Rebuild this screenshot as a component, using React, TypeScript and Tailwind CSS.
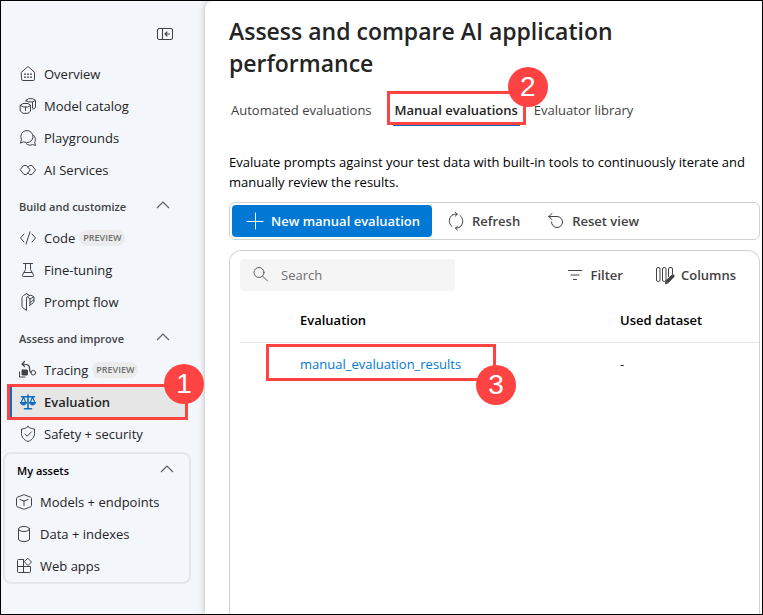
import type { ReactNode } from "react";

function Icon({ children, className = "size-4" }: { children: ReactNode; className?: string }) {
  return (
    <svg
      viewBox="0 0 16 16"
      className={`shrink-0 overflow-visible ${className}`}
      fill="none"
      stroke="currentColor"
      strokeWidth="1"
      strokeLinecap="round"
      strokeLinejoin="round"
      aria-hidden="true"
    >
      {children}
    </svg>
  );
}

const icons = {
  collapse: (
    <Icon>
      <rect x="0.5" y="2.5" width="15" height="11" rx="1.5" />
      <path d="M5.5 2.5v11M12.500 8H8M10 6 8 8l2 2" strokeWidth="1.100" />
    </Icon>
  ),
  overview: (
    <Icon>
      <path d="M1.5 6.2 7.2 1.1a1.2 1.2 0 0 1 1.6 0l5.7 5.1v7a1.3 1.3 0 0 1-1.3 1.3H2.8a1.3 1.3 0 0 1-1.3-1.3z" />
      <path strokeWidth="1.7" d="M5 8.2h.01M8 8.2h.01M11 8.2h.01M5 11.2h.01M8 11.2h.01M11 11.2h.01" />
    </Icon>
  ),
  catalog: (
    <Icon>
      <path d="M6 3.500V2.300L8.500.7h4l3 1.600v7.200l-2.500 1.700M6 2.400l2.800 1.500h3.700l3-1.500M12.500 4v6" />
      <path d="M.5 7.200 3 5.500h5l2.500 1.700v6L8 15.300H3L.5 13.200zM.5 7.400 3.200 9h4.600l2.700-1.600M5.500 9v3.500" />
    </Icon>
  ),
  playground: (
    <Icon>
      <path d="M.6 12.800l.9-3.300A6.100 6.100 0 1 1 4 12z" />
      <path d="M6.300 13.800c2 1.600 4.200 1.700 6.200.8l3 .8-.8-3c1.200-2.400.8-5.200-1-7" />
    </Icon>
  ),
  services: (
    <Icon>
      <path d="M4 3.500h2.500L10.200 8 6.500 12.500H4L.4 8z" />
      <path d="M8 10.900l1.500 1.600H12L15.600 8 12 3.500H9.500L8 5.200" />
    </Icon>
  ),
  code: (
    <Icon>
      <path d="M4 4 .5 8 4 12M12 4l3.500 4-3.500 4M10 1.800 6 14.200" />
    </Icon>
  ),
  tuning: (
    <Icon>
      <path d="M3.500 1.500h9M5.500 1.500v6L2.500 13c-.5.9 0 1.500.8 1.500h9.400c.8 0 1.300-.6.8-1.500l-3-5.500v-6M4.300 10.500h7.400" />
    </Icon>
  ),
  flow: (
    <Icon>
      <path d="M6.500-.3 3.500 1.500C2.500 2.100 2 3 2 4.200v8c0 .7.300 1.100.8 1.500l3.700 2.800V4.200c0-.8.4-1.400 1.100-1.700L10 1.200c.3-.1.600-.1 1 0l2.300 1.200c.5.300.7.700.7 1.200v3.800c0 .6-.2 1-.7 1.300L9.500 11.500M6.500-.3l2.500 1.500M7.500 3 10 5v5.500M10 5l3.800-2M10 8.500 13.500 6" />
    </Icon>
  ),
  tracing: (
    <Icon>
      <path strokeWidth="1.200" d="M4.500-.5 2 2l2.500 2.500M2 2l4.500.5c2.200.4 3 1.700 3 3.500 0 2.200.3 4 1.500 4.500" />
      <circle cx="13.300" cy="10.700" r="2.300" />
      <path d="M-.5 10v5h5.500" />
      <rect x="2" y="8" width="5.500" height="5" rx=".5" fill="currentColor" />
    </Icon>
  ),
  evaluation: (
    <Icon>
      <path strokeWidth="1.600" d="M1.500 2.800h13M8 1v13M4.500 14.700h7M8 10v4" />
      <path strokeWidth="1.200" d="M3.500 3 1 9M3.500 3 6 9M12.500 3 10 9M12.500 3 15 9" />
      <path
        fill="currentColor"
        d="M.6 8.500h5.800C6.400 10 5 11 3.500 11S.6 10 .6 8.500zM9.600 8.500h5.800c0 1.500-1.400 2.500-2.900 2.500s-2.900-1-2.900-2.500z"
      />
    </Icon>
  ),
  shield: (
    <Icon>
      <path d="M8 .6c2 1.600 4.200 2.400 6.500 2.400v4.500c0 3.800-2.300 6.400-6.500 8-4.200-1.600-6.500-4.200-6.500-8V3C3.800 3 6 2.200 8 .6z" />
      <path d="m5 8 2.200 2.200L11.200 6" />
    </Icon>
  ),
  cube: (
    <Icon>
      <path d="M7.300.9a2 2 0 0 1 1.400 0l5.900 2.300c.5.200.9.700.9 1.200v7.200c0 .5-.4 1-.9 1.200l-5.900 2.300a2 2 0 0 1-1.400 0l-5.900-2.300c-.5-.2-.9-.7-.9-1.200V4.400c0-.5.4-1 .9-1.200z" />
      <path d="M4 5.500 8 7l4-1.500M8 7v4.500" />
    </Icon>
  ),
  data: (
    <Icon>
      <ellipse cx="8" cy="3" rx="5.500" ry="2.500" />
      <path d="M2.500 3v10c0 1.400 2.500 2.500 5.500 2.500s5.500-1.100 5.500-2.500V3" />
    </Icon>
  ),
  apps: (
    <Icon>
      <path d="M7.500 1.500h-5a1 1 0 0 0-1 1v11a1 1 0 0 0 1 1h11a1 1 0 0 0 1-1v-5h-13M7.500 1.500v13" />
      <path d="m12 .5 3.500 3.500L12 7.500 8.500 4z" />
    </Icon>
  ),
};

type Item = { label: string; icon: ReactNode; preview?: boolean };

function Badge({ n, className }: { n: number; className: string }) {
  return (
    <span
      className={`absolute z-10 flex size-10 items-center justify-center rounded-full bg-[#ff4343] font-['Liberation_Sans',sans-serif] text-[28px] leading-none font-normal text-white ${className}`}
    >
      {n}
    </span>
  );
}

function NavItem({ label, icon, preview }: Item) {
  return (
    <li>
      <a href="#" className="flex h-8 items-center gap-2 pl-[19px] text-[#242424]">
        <span className="text-[#424242]">{icon}</span>
        <span>{label}</span>
        {preview && (
          <span className="-ml-1 rounded-full bg-[#ebebeb] px-1 text-[9px] leading-4 font-semibold text-[#707070]">PREVIEW</span>
        )}
      </a>
    </li>
  );
}

function SectionButton({ children, className }: { children: ReactNode; className: string }) {
  return (
    <button type="button" className={`flex h-8 w-full items-center justify-between pt-0.5 text-[11px] font-semibold ${className}`}>
      {children}
      <svg viewBox="0 0 14 8" className="mb-1 h-2 w-3.5 text-[#616161]" fill="none" stroke="currentColor" strokeWidth="1.2" aria-hidden="true">
        <path d="m1 7 6-6 6 6" />
      </svg>
    </button>
  );
}

function Sidebar() {
  return (
    <nav className="w-51 shrink-0 bg-[#f3f6fb]">
      <div className="flex h-[57px] items-center justify-end pt-2 pr-8">
        <button type="button" aria-label="Collapse navigation" className="text-[#424242]">
          {icons.collapse}
        </button>
      </div>
      <ul>
        <NavItem label="Overview" icon={icons.overview} />
        <NavItem label="Model catalog" icon={icons.catalog} />
        <NavItem label="Playgrounds" icon={icons.playground} />
        <NavItem label="AI Services" icon={icons.services} />
      </ul>
      <SectionButton className="mt-1 pr-[35px] pl-[18px] text-[#424242]">Build and customize</SectionButton>
      <ul>
        <NavItem label="Code" icon={icons.code} preview />
        <NavItem label="Fine-tuning" icon={icons.tuning} />
        <NavItem label="Prompt flow" icon={icons.flow} />
      </ul>
      <SectionButton className="mt-1 pr-[35px] pl-[18px] text-[#424242]">Assess and improve</SectionButton>
      <ul>
        <NavItem label="Tracing" icon={icons.tracing} preview />
        <li className="relative">
          <a
            href="#"
            aria-current="page"
            className="mr-4.5 ml-2 flex h-8 items-center gap-2 border-l-3 border-[#0f6cbd] bg-[#e6e6e6] pl-2 font-semibold text-[#242424]"
          >
            <span className="text-[#0f6cbd]">{icons.evaluation}</span>
            Evaluation
          </a>
          <span className="pointer-events-none absolute -inset-y-0.5 right-[17px] left-1.5 border-3 border-[#ff4343]" />
          <Badge n={1} className="-top-5.5 right-px" />
        </li>
        <NavItem label="Safety + security" icon={icons.shield} />
      </ul>
      <section className="mt-0.5 mr-3.5 ml-0.5 rounded-lg border-2 border-[#e4e6ea]">
        <SectionButton className="pr-[15px] pl-3 text-black">My assets</SectionButton>
        <ul className="-ml-2">
          <NavItem label="Models + endpoints" icon={icons.cube} />
          <NavItem label="Data + indexes" icon={icons.data} />
          <NavItem label="Web apps" icon={icons.apps} />
        </ul>
      </section>
    </nav>
  );
}

function Toolbar() {
  return (
    <div className="mt-2.5 flex h-[38px] items-center rounded-md border border-[#d1d1d1] px-0.5 font-semibold text-[#424242]">
      <button type="button" className="flex h-8 items-center gap-2 rounded bg-[#0078d4] pr-3 pl-[15px] text-white">
        <Icon>
          <path d="M8.500 0v16M0 8.500h16" />
        </Icon>
        New manual evaluation
      </button>
      <button type="button" className="ml-4 flex items-center gap-2">
        <Icon>
          <path d="M4.500 1.900A7 7 0 0 0 4 13.600M12 2.400A7.200 7.200 0 0 1 12 14M4.500 1.900A7 7 0 0 1 9 1.200M7.500 15.200A7 7 0 0 0 12 14" />
          <path d="M7.200-.8 9.300 1.200 7.200 3.200M9.500 13.200 7.500 15.200l2 2" />
        </Icon>
        Refresh
      </button>
      <button type="button" className="ml-7 flex items-center gap-2">
        <Icon>
          <path d="M4 .5.800 3.500l3.200 3M.8 3.500h8.200A5.500 5.500 0 1 1 3.500 9" />
        </Icon>
        Reset view
      </button>
    </div>
  );
}

export default function App() {
  return (
    <div className="flex min-h-screen border border-black bg-[#f3f6fb] font-['Open_Sans','Noto_Sans',sans-serif] text-[13px] leading-5">
      <Sidebar />
      <main className="flex min-w-0 flex-1 flex-col rounded-tl-lg bg-white pt-3.5 pr-0.5 pl-6 shadow-[0_0_6px_rgba(0,0,0,0.25)]">
        <h1 className="max-w-[440px] text-[23px] leading-8 font-semibold text-[#242424]">
          Assess and compare AI application performance
        </h1>
        <div role="tablist" className="mt-[15px] ml-0.5 flex h-8 items-center gap-[23px] text-[#424242]">
          <button type="button" role="tab" aria-selected="false">
            Automated evaluations
          </button>
          <div className="relative flex h-8 items-center">
            <button type="button" role="tab" aria-selected="true" className="font-semibold text-[#242424]">
              Manual evaluations
            </button>
            <span className="absolute -inset-x-0.5 bottom-0 h-0.5 bg-[#0f6cbd]" />
            <span className="pointer-events-none absolute -inset-x-2 -top-[3px] bottom-px border-3 border-[#ff4343]" />
            <Badge n={2} className="-top-[27px] -right-7.5" />
          </div>
          <button type="button" role="tab" aria-selected="false" className="-ml-[7px]">
            Evaluator library
          </button>
        </div>
        <p className="mt-[26px] text-black">
          Evaluate prompts against your test data with built-in tools to continuously iterate and manually review the results.
        </p>
        <Toolbar />
        <section className="mt-2.5 flex-1 rounded-t-xl border border-b-0 border-[#d1d1d1] pt-2 pl-2.5">
          <div className="flex items-center justify-between pr-[23px] font-semibold text-[#424242]">
            <label className="flex h-8 w-[215px] items-center gap-3 rounded bg-[#f5f5f5] pl-[13px] text-[#616161]">
              <Icon>
                <circle cx="6" cy="5.500" r="5" />
                <path d="m9.700 9.200 4.800 4.800" />
              </Icon>
              <input
                type="search"
                aria-label="Search"
                placeholder="Search"
                className="min-w-0 flex-1 bg-transparent font-normal outline-none placeholder:text-[#707070]"
              />
            </label>
            <div className="flex gap-[34px]">
              <button type="button" className="flex items-center gap-2">
                <Icon>
                  <path strokeWidth="1.200" d="M1.500 3.500h13M4 8h8M6.500 12.500h3" />
                </Icon>
                Filter
              </button>
              <button type="button" className="flex items-center gap-2">
                <Icon>
                  <rect x="-.5" y=".5" width="3.500" height="14" rx="1.500" />
                  <rect x="5.500" y=".5" width="3.500" height="14" rx="1.500" />
                  <path d="M11.500 9.500V2A1.500 1.500 0 0 1 13 .5h1A1.500 1.500 0 0 1 15.500 2v4.500" />
                  <path fill="currentColor" d="m8.500 16.500.8-3L14.800 8a1.300 1.300 0 0 1 1.900 1.900L11.500 15.400z" />
                </Icon>
                Columns
              </button>
            </div>
          </div>
          <table className="mt-[7px] w-full table-fixed text-left">
            <thead>
              <tr className="h-11 border-b border-[#e8e8e8] text-black">
                <th className="w-15 p-0" aria-label="Selection" />
                <th className="w-80 p-0 font-semibold">Evaluation</th>
                <th className="p-0 font-semibold">Used dataset</th>
              </tr>
            </thead>
            <tbody>
              <tr className="h-11">
                <td className="p-0" />
                <td className="relative p-0">
                  <a href="#" className="text-[#0078d4]">
                    manual_evaluation_results
                  </a>
                  <span className="pointer-events-none absolute top-px right-[124px] bottom-[5px] -left-[34px] border-3 border-[#ff4343]" />
                  <Badge n={3} className="top-[22px] right-[104px]" />
                </td>
                <td className="p-0 text-[#242424]">-</td>
              </tr>
            </tbody>
          </table>
        </section>
      </main>
    </div>
  );
}
